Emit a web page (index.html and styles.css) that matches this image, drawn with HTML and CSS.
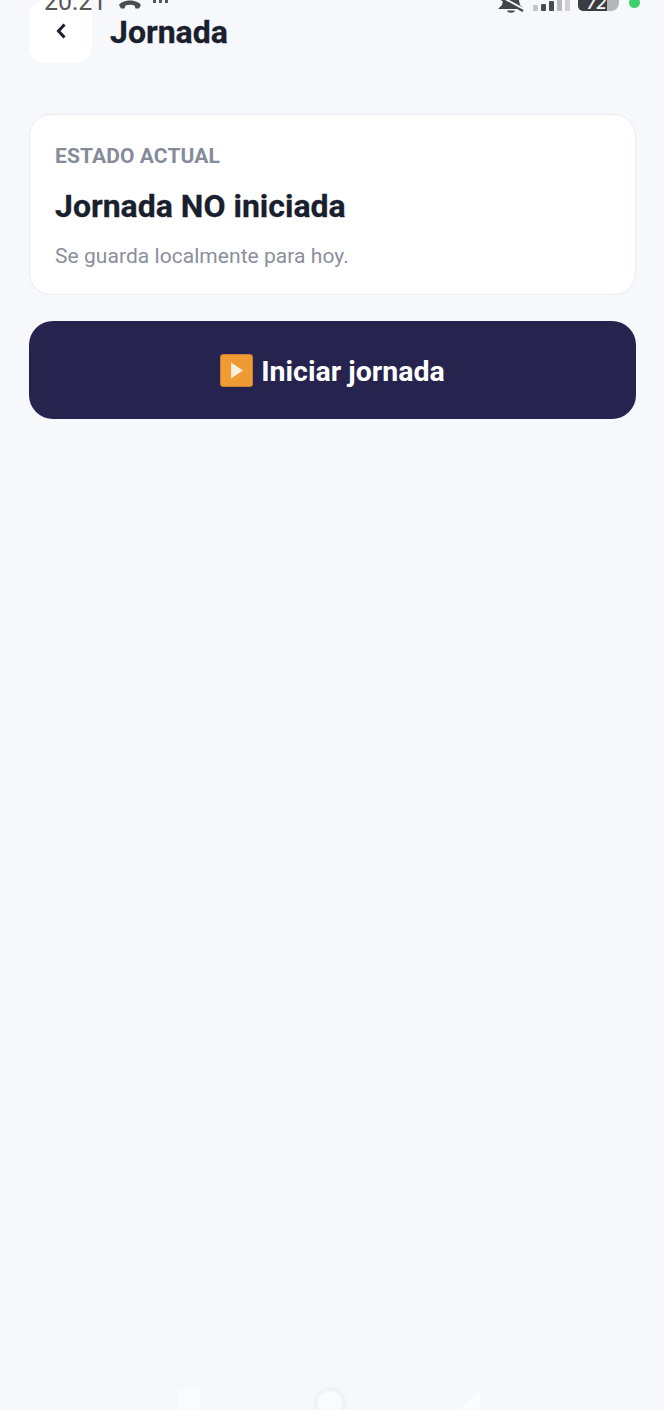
FILE: index.html
```html
<!DOCTYPE html>
<html lang="es">
<head>
  <meta charset="UTF-8" />
  <meta name="viewport" content="width=device-width, initial-scale=1" />
  <title>Jornada</title>
  <link rel="stylesheet" href="styles.css">
</head>
<body>
  <!-- system status bar, cut off at the top of the capture -->
  <div class="status-bar">
    <div class="status-left">
      <span class="clock">20:21</span>
      <svg class="call-icon" width="24" height="12" viewBox="0 0 24 12">
        <path d="M1 7C5 1 19 1 23 7L21 10.500H17.500L16.500 7.500C14 6.500 10 6.500 7.500 7.500L6.500 10.500H3Z" fill="#4a4b50"/>
      </svg>
      <span class="dots">
        <i></i><i></i><i></i>
      </span>
    </div>
    <div class="status-right">
      <svg class="bell-icon" width="30" height="14" viewBox="0 0 30 14">
        <path d="M8 -4H22L24 5L28 9H2L6 5Z" fill="#44454a"/>
        <path d="M11 10.500H19C18.500 13.500 11.500 13.500 11 10.500Z" fill="#44454a"/>
        <path d="M5 -3L29 10" stroke="#f6f8fc" stroke-width="2.500"/>
        <path d="M5 -1L27 11" stroke="#44454a" stroke-width="2.200"/>
      </svg>
      <div class="signal">
        <i class="b1"></i><i class="b2"></i><i class="b3"></i><i class="b4"></i><i class="b5"></i>
      </div>
      <div class="battery"><span>72</span></div>
      <span class="green-dot"></span>
    </div>
  </div>

  <header class="topbar">
    <button class="back-btn" aria-label="Volver">
      <svg width="12" height="18" viewBox="0 0 12 18">
        <path d="M9.500 2.500L3.500 9L9.500 15.500" fill="none" stroke="#1a1f2e" stroke-width="3"/>
      </svg>
    </button>
    <h1>Jornada</h1>
  </header>

  <main class="content">
    <section class="card">
      <div class="card-label">ESTADO ACTUAL</div>
      <div class="card-title">Jornada NO iniciada</div>
      <div class="card-note">Se guarda localmente para hoy.</div>
    </section>

    <button class="start-btn">
      <svg class="play-icon" width="33" height="33" viewBox="0 0 33 33">
        <rect x="0.500" y="0.500" width="32" height="32" rx="2.500" fill="#f09a33" stroke="#c9802f"/>
        <path d="M11 8.500L23 16.500L11 24.500Z" fill="#fbeeda"/>
      </svg>
      <span>Iniciar jornada</span>
    </button>
  </main>

  <!-- faint android nav bar -->
  <div class="nav-bar">
    <span class="nav-square"></span>
    <span class="nav-circle"></span>
    <svg class="nav-back" width="26" height="22" viewBox="0 0 26 22">
      <path d="M23 1V22H2Z" fill="#fbfcfe"/>
    </svg>
  </div>
</body>
</html>
```

FILE: styles.css
```css
html, body {
  height: 100%;
}

body {
  margin: 0;
  position: relative;
  overflow: hidden;
  background: #f6f8fc;
  color: #1a1f2e;
  font-family: Roboto, "Liberation Sans", sans-serif;
}

.status-bar {
  position: absolute;
  top: 0;
  left: 0;
  right: 0;
  height: 13px;
  overflow: hidden;
  z-index: 2;
}

.status-left {
  position: absolute;
  top: -9px;
  left: 44px;
  display: flex;
  align-items: flex-end;
  gap: 12px;
  height: 22px;
}

.clock {
  font-size: 25px;
  line-height: 22px;
  color: #55565a;
}

.call-icon {
  margin-bottom: 3px;
}

.dots {
  display: flex;
  gap: 3px;
  height: 15px;
  margin-left: -1px;
}

.dots i {
  width: 3px;
  height: 5px;
  background: #55565a;
}

.status-right {
  position: absolute;
  top: 0;
  left: 496px;
  display: flex;
  gap: 7px;
}

.signal {
  display: flex;
  align-items: flex-end;
  gap: 3.500px;
  height: 11px;
}

.signal i {
  width: 4.500px;
  border-radius: 1px;
}

.signal .b1 { height: 6px; background: #c4c5c9; }
.signal .b2 { height: 7px; background: #4a4b50; }
.signal .b3 { height: 10px; background: #4a4b50; }
.signal .b4 { height: 12px; background: #b9babe; }
.signal .b5 { height: 12px; background: #cfd0d3; }

.battery {
  width: 41px;
  height: 11px;
  margin-left: 1px;
  border-radius: 0 0 8px 5px;
  background: linear-gradient(90deg, #3c3d40 70%, #b5b6b9 70%);
  overflow: hidden;
}

.battery span {
  display: block;
  margin: -6px 0 0 9px;
  font-size: 18px;
  line-height: 18px;
  font-weight: 500;
  font-style: italic;
  color: #f4f4f6;
}

.green-dot {
  width: 11px;
  height: 11px;
  margin: -3px 0 0 3px;
  border-radius: 50%;
  background: #3ccf6a;
}

.topbar {
  display: flex;
  align-items: center;
  gap: 18px;
  height: 85px;
  box-sizing: border-box;
  padding: 0 29px 23px;
  border-bottom: 1px solid #f8f9fc;
}

.back-btn {
  display: flex;
  align-items: center;
  justify-content: center;
  width: 63px;
  height: 63px;
  margin-top: 1px;
  padding: 0;
  border: none;
  border-radius: 16px;
  background: #fff;
}

.topbar h1 {
  margin: 2px 0 0;
  font-size: 32px;
  font-weight: 700;
  color: #1a1f2e;
  -webkit-text-stroke: 0.3px #1a1f2e;
}

.content {
  display: flex;
  flex-direction: column;
  gap: 25px;
  padding: 29px 28px 0 29px;
}

.card {
  height: 181px;
  box-sizing: border-box;
  padding: 27px 25px 0;
  border: 1px solid #e9ebf0;
  border-radius: 22px;
  background: #fff;
}

.card-label {
  font-size: 21px;
  line-height: 28px;
  font-weight: 700;
  letter-spacing: 0.1px;
  color: #858b99;
}

.card-title {
  margin-top: 16px;
  font-size: 32px;
  line-height: 40px;
  font-weight: 700;
  color: #1a1f2e;
  -webkit-text-stroke: 0.3px #1a1f2e;
}

.card-note {
  margin-top: 16px;
  font-size: 21px;
  line-height: 28px;
  letter-spacing: 0.05px;
  color: #8b8f9a;
}

.start-btn {
  display: flex;
  align-items: center;
  justify-content: center;
  gap: 8px;
  height: 98px;
  margin-top: 1px;
  padding: 0;
  border: none;
  border-radius: 24px;
  background: #26244f;
  color: #fff;
  font-family: inherit;
  font-size: 28.500px;
  font-weight: 700;
}

.start-btn span {
  margin-top: 2px;
}

.nav-bar {
  position: absolute;
  left: 0;
  right: 0;
  bottom: 0;
  height: 22px;
  overflow: hidden;
  filter: blur(1px);
}

.nav-square {
  position: absolute;
  left: 178px;
  top: 1px;
  width: 22px;
  height: 30px;
  border-radius: 3px;
  background: #fafbfd;
}

.nav-circle {
  position: absolute;
  left: 315px;
  top: 0;
  width: 26px;
  height: 26px;
  border: 2px solid #e9ebef;
  border-radius: 50%;
  background: #fafbfd;
}

.nav-back {
  position: absolute;
  left: 457px;
  top: 0;
}
```
